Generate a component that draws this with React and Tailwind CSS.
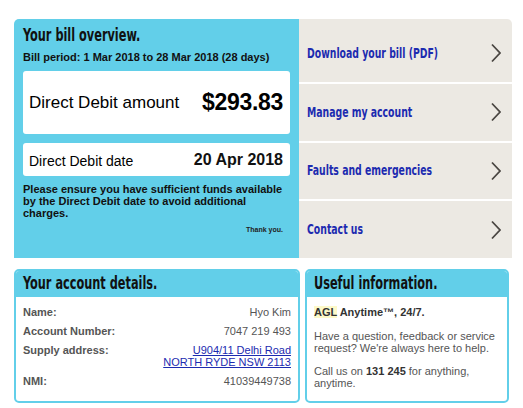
const cond = { fontFamily: '"DejaVu Sans Condensed", sans-serif' };

// narrow display face stand-in: condensed bold squeezed horizontally
const Narrow = ({ className, children }) => (
  <span className={`inline-block origin-left scale-x-[0.74] whitespace-nowrap font-bold ${className}`} style={cond}>
    {children}
  </span>
);

const Chevron = () => (
  <svg width="12" height="20" viewBox="0 0 12 20" className="shrink-0">
    <path d="M2 1.5 L10 10 L2 18.5" fill="none" stroke="#4a4642" strokeWidth="1.8" />
  </svg>
);

const MenuItem = ({ label, first, last }) => (
  <div className={`flex flex-1 items-center justify-between bg-[#ece9e3] pl-2 pr-[10px] ${first ? 'pt-[6px]' : ''} ${last ? '' : 'border-b-2 border-white'}`}>
    <Narrow className="text-[14px] text-[#1c2bb0]">{label}</Narrow>
    <Chevron />
  </div>
);

const Row = ({ label, children }) => (
  <div className="flex justify-between">
    <span className="font-bold text-[#555]">{label}</span>
    <span className="text-right text-[#555]">{children}</span>
  </div>
);

export default function App() {
  return (
    <div className="h-[408px] w-[523px] bg-white pl-[14px] pr-[11px] pt-[19px]" style={{ fontFamily: '"Liberation Sans", Arial, sans-serif' }}>
      <div className="flex h-[239px] overflow-hidden rounded-t-[5px]">
        <div className="w-[285px] bg-[#62cfe9] px-[9px] pt-[6px]">
          <h2 className="leading-[20px]"><Narrow className="text-[17px] text-[#111]">Your bill overview.</Narrow></h2>
          <p className="mt-[5px] text-[11px] font-bold leading-[13px] text-[#111]">Bill period: 1 Mar 2018 to 28 Mar 2018 (28 days)</p>
          <div className="mt-[7px] flex h-[63px] items-center justify-between rounded-[3px] bg-white pl-[6px] pr-[7px]">
            <span className="text-[17px] text-black">Direct Debit amount</span>
            <span className="text-[23px] font-bold tracking-[-0.3px] text-black">$293.83</span>
          </div>
          <div className="mt-[9px] flex h-[33px] items-center justify-between rounded-[3px] bg-white pl-[6px] pr-[7px]">
            <span className="mt-[3px] text-[14px] text-black">Direct Debit date</span>
            <span className="text-[16px] font-bold text-[#111]">20 Apr 2018</span>
          </div>
          <p className="mt-[7px] text-[11px] font-bold leading-[12px] text-[#111]">
            Please ensure you have sufficient funds available by the Direct Debit date to avoid additional charges.
          </p>
          <p className="mt-[6px] pr-[7px] text-right text-[7px] font-bold text-[#222]">Thank you.</p>
        </div>
        <div className="flex flex-1 flex-col">
          <MenuItem label="Download your bill (PDF)" first />
          <MenuItem label="Manage my account" />
          <MenuItem label="Faults and emergencies" />
          <MenuItem label="Contact us" last />
        </div>
      </div>

      <div className="mt-[11px] flex gap-[5px]">
        <div className="h-[134px] w-[286px] overflow-hidden rounded-[5px] border-2 border-[#62cfe9]">
          <div className="flex h-[26px] items-center bg-[#62cfe9] px-[7px]">
            <h3><Narrow className="text-[17px] text-[#111]">Your account details.</Narrow></h3>
          </div>
          <div className="flex flex-col gap-[7px] px-[7px] pt-[9px] text-[11px] leading-[12px]">
            <Row label="Name:">Hyo Kim</Row>
            <Row label="Account Number:">7047 219 493</Row>
            <Row label="Supply address:">
              <a className="text-[#1c2bb0] underline">U904/11 Delhi Road<br />NORTH RYDE NSW 2113</a>
            </Row>
            <Row label="NMI:">41039449738</Row>
          </div>
        </div>
        <div className="h-[134px] w-[204px] overflow-hidden rounded-[5px] border-2 border-[#62cfe9]">
          <div className="flex h-[26px] items-center bg-[#62cfe9] px-[7px]">
            <h3><Narrow className="text-[17px] text-[#111]">Useful information.</Narrow></h3>
          </div>
          <div className="px-[7px] pt-[9px] text-[11px] leading-[12px] text-[#555]">
            <p className="font-bold text-[#333]"><span className="bg-[#fdf9c8]">AGL</span> Anytime™, 24/7.</p>
            <p className="mt-[12px]">Have a question, feedback or service request? We're always here to help.</p>
            <p className="mt-[11px]">Call us on <span className="font-bold text-[#333]">131 245</span> for anything, anytime.</p>
          </div>
        </div>
      </div>
    </div>
  );
}
